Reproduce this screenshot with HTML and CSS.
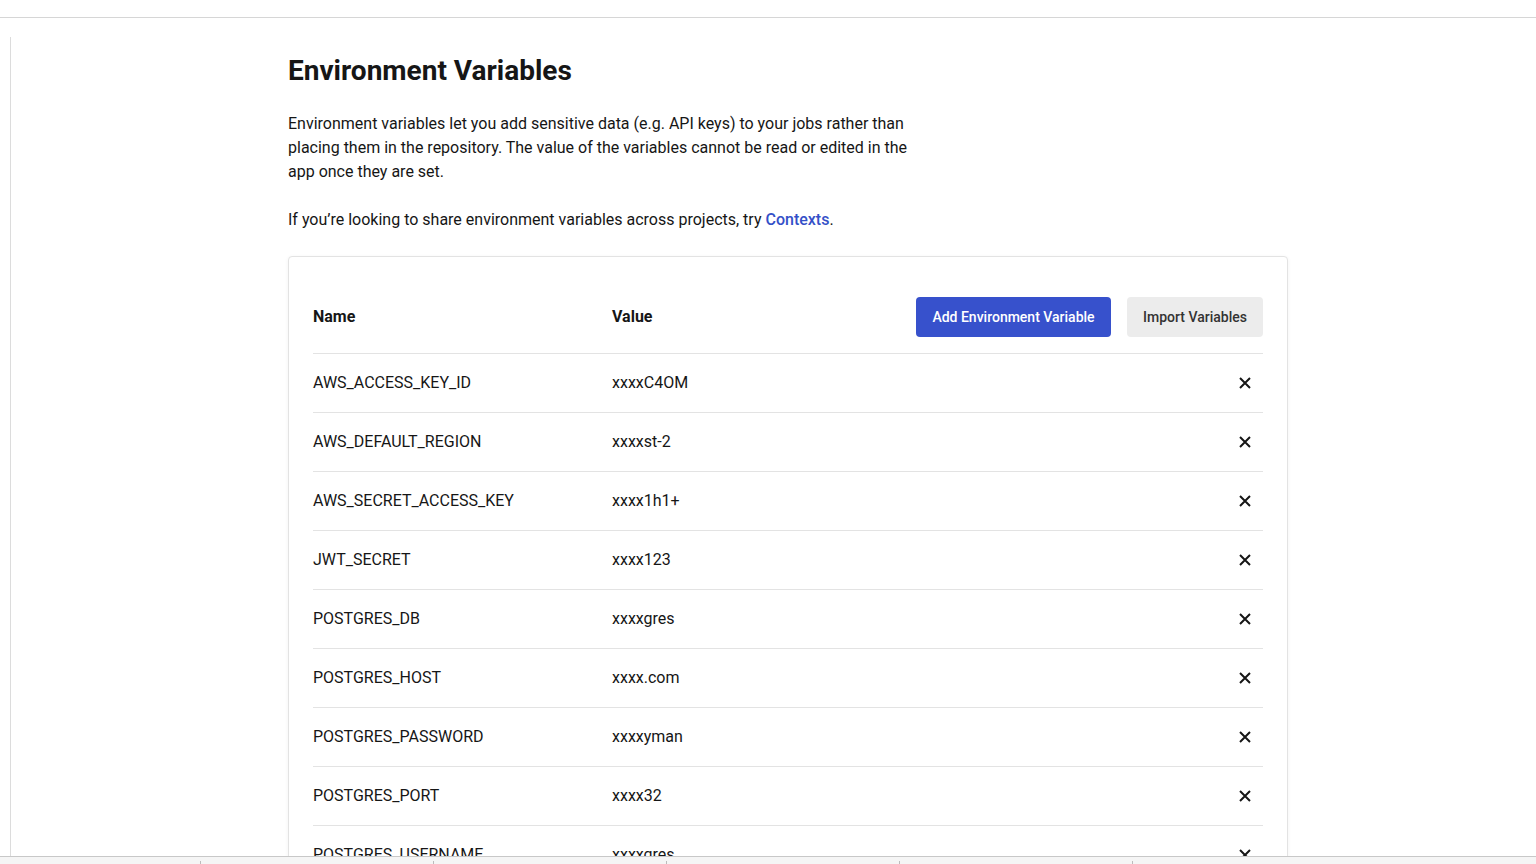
FILE: index.html
```html
<!DOCTYPE html>
<html lang="en">
<head>
<meta charset="utf-8">
<title>Environment Variables</title>
<link rel="stylesheet" href="styles.css">
</head>
<body>
<div class="topbar"></div>
<div class="layout">
  <div class="rail"></div>
  <main class="content">
    <h1 class="title">Environment Variables</h1>
    <p class="text">Environment variables let you add sensitive data (e.g. API keys) to your jobs rather than placing them in the repository. The value of the variables cannot be read or edited in the app once they are set.</p>
    <p class="text">If you’re looking to share environment variables across projects, try <a class="link" href="#">Contexts</a>.</p>
    <section class="card">
      <div class="row head">
        <div class="cell name">Name</div>
        <div class="cell value">Value</div>
        <div class="actions">
          <button class="btn primary">Add Environment Variable</button>
          <button class="btn secondary">Import Variables</button>
        </div>
      </div>
      <div class="row"><div class="cell">AWS_ACCESS_KEY_ID</div><div class="cell">xxxxC4OM</div><button class="del"><svg viewBox="0 0 12 12" width="12" height="12"><path d="M1 1L11 11M11 1L1 11"/></svg></button></div>
      <div class="row"><div class="cell">AWS_DEFAULT_REGION</div><div class="cell">xxxxst-2</div><button class="del"><svg viewBox="0 0 12 12" width="12" height="12"><path d="M1 1L11 11M11 1L1 11"/></svg></button></div>
      <div class="row"><div class="cell">AWS_SECRET_ACCESS_KEY</div><div class="cell">xxxx1h1+</div><button class="del"><svg viewBox="0 0 12 12" width="12" height="12"><path d="M1 1L11 11M11 1L1 11"/></svg></button></div>
      <div class="row"><div class="cell">JWT_SECRET</div><div class="cell">xxxx123</div><button class="del"><svg viewBox="0 0 12 12" width="12" height="12"><path d="M1 1L11 11M11 1L1 11"/></svg></button></div>
      <div class="row"><div class="cell">POSTGRES_DB</div><div class="cell">xxxxgres</div><button class="del"><svg viewBox="0 0 12 12" width="12" height="12"><path d="M1 1L11 11M11 1L1 11"/></svg></button></div>
      <div class="row"><div class="cell">POSTGRES_HOST</div><div class="cell">xxxx.com</div><button class="del"><svg viewBox="0 0 12 12" width="12" height="12"><path d="M1 1L11 11M11 1L1 11"/></svg></button></div>
      <div class="row"><div class="cell">POSTGRES_PASSWORD</div><div class="cell">xxxxyman</div><button class="del"><svg viewBox="0 0 12 12" width="12" height="12"><path d="M1 1L11 11M11 1L1 11"/></svg></button></div>
      <div class="row"><div class="cell">POSTGRES_PORT</div><div class="cell">xxxx32</div><button class="del"><svg viewBox="0 0 12 12" width="12" height="12"><path d="M1 1L11 11M11 1L1 11"/></svg></button></div>
      <div class="row"><div class="cell">POSTGRES_USERNAME</div><div class="cell">xxxxgres</div><button class="del"><svg viewBox="0 0 12 12" width="12" height="12"><path d="M1 1L11 11M11 1L1 11"/></svg></button></div>
    </section>
  </main>
</div>
<div class="statusbar">
  <span class="tick t1"></span><span class="tick t2"></span><span class="tick t3"></span><span class="tick t4"></span><span class="tick t5"></span>
</div>
</body>
</html>
```
FILE: styles.css
```css
* { box-sizing: border-box; }
html, body { margin: 0; padding: 0; background: #fff; }
body {
  font-family: Roboto, "Liberation Sans", sans-serif;
  color: #161616;
  font-size: 16px;
  line-height: 24px;
}
.topbar {
  height: 18px;
  border-bottom: 1px solid #d6d6d6;
}
.layout {
  display: flex;
  align-items: stretch;
}
.rail {
  width: 11px;
  margin-top: 19px;
  border-right: 1px solid #dcdcdc;
  flex: none;
}
.content {
  padding-left: 277px;
  padding-top: 36px;
  width: 1288px;
}
.title {
  margin: 0;
  font-size: 28px;
  line-height: 34px;
  font-weight: 700;
  color: #161616;
  letter-spacing: 0;
}
.text {
  margin: 24px 0 0;
  max-width: 622px;
}
.text + .text { margin-top: 24px; }
.link {
  color: #3450c8;
  font-weight: 500;
  text-decoration: none;
}
.card {
  margin-top: 24px;
  width: 1000px;
  border: 1px solid #e3e3e3;
  border-radius: 4px;
  box-shadow: 0 1px 4px rgba(0,0,0,0.05);
  padding: 24px 24px 0;
  background: #fff;
}
.row {
  display: grid;
  grid-template-columns: 299px 1fr auto;
  align-items: center;
  height: 59px;
  border-bottom: 1px solid #e3e3e3;
}
.row.head {
  height: 73px;
  font-weight: 700;
}
.cell { white-space: nowrap; }
.actions {
  display: flex;
  gap: 16px;
}
.btn {
  font-family: Roboto, "Liberation Sans", sans-serif;
  font-size: 14px;
  font-weight: 500;
  height: 40px;
  padding: 0 16px;
  border: none;
  border-radius: 4px;
  cursor: pointer;
}
.btn.primary {
  background: #3751cc;
  color: #fff;
  width: 195px;
}
.btn.secondary {
  background: #ececec;
  color: #333;
  width: 136px;
}
.del {
  background: none;
  border: none;
  padding: 0;
  width: 12px;
  height: 12px;
  margin-right: 12px;
  display: flex;
  cursor: pointer;
}
.del svg path {
  stroke: #161616;
  stroke-width: 2;
  fill: none;
}
.statusbar {
  position: fixed;
  left: 0;
  right: 0;
  bottom: 0;
  height: 8px;
  background: #f5f5f5;
  border-top: 1px solid #c8c8c8;
}
.tick {
  position: absolute;
  bottom: 0;
  width: 1px;
  height: 3px;
  background: #bcbcbc;
}
.t1 { left: 200px; }
.t2 { left: 433px; }
.t3 { left: 666px; }
.t4 { left: 899px; }
.t5 { left: 1132px; }
```
